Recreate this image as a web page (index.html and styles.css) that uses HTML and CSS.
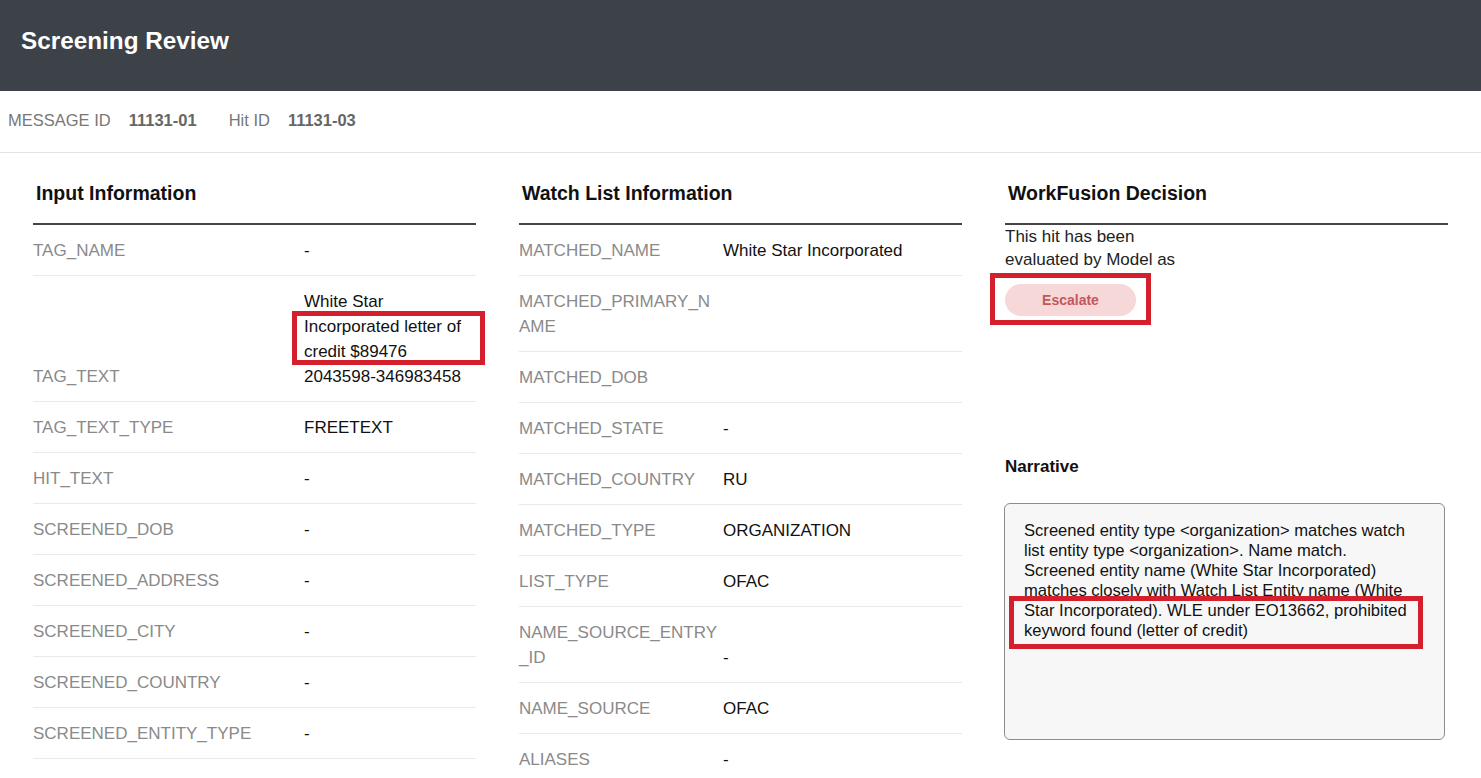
FILE: index.html
```html
<!DOCTYPE html>
<html lang="en">
<head>
<meta charset="utf-8">
<title>Screening Review</title>
<link rel="stylesheet" href="styles.css">
</head>
<body>
<div class="page">
  <header class="topbar">
    <h1 class="title">Screening Review</h1>
  </header>
  <div class="ids">
    <span class="id-label">MESSAGE ID</span>
    <span class="id-value">11131-01</span>
    <span class="id-label id-second">Hit ID</span>
    <span class="id-value">11131-03</span>
  </div>

  <main class="columns">
    <section class="col">
      <h2 class="col-head">Input Information</h2>
      <table class="kv kv-input">
        <colgroup><col class="c-label1"><col></colgroup>
        <tr><td class="k">TAG_NAME</td><td class="v">-</td></tr>
        <tr><td class="k">TAG_TEXT</td><td class="v">White Star Incorporated letter of credit $89476 2043598-346983458</td></tr>
        <tr><td class="k">TAG_TEXT_TYPE</td><td class="v">FREETEXT</td></tr>
        <tr><td class="k">HIT_TEXT</td><td class="v">-</td></tr>
        <tr><td class="k">SCREENED_DOB</td><td class="v">-</td></tr>
        <tr><td class="k">SCREENED_ADDRESS</td><td class="v">-</td></tr>
        <tr><td class="k">SCREENED_CITY</td><td class="v">-</td></tr>
        <tr><td class="k">SCREENED_COUNTRY</td><td class="v">-</td></tr>
        <tr><td class="k">SCREENED_ENTITY_TYPE</td><td class="v">-</td></tr>
      </table>
    </section>

    <section class="col">
      <h2 class="col-head">Watch List Information</h2>
      <table class="kv kv-watch">
        <colgroup><col class="c-label2"><col></colgroup>
        <tr><td class="k">MATCHED_NAME</td><td class="v">White Star Incorporated</td></tr>
        <tr><td class="k">MATCHED_PRIMARY_NAME</td><td class="v"></td></tr>
        <tr><td class="k">MATCHED_DOB</td><td class="v"></td></tr>
        <tr><td class="k">MATCHED_STATE</td><td class="v">-</td></tr>
        <tr><td class="k">MATCHED_COUNTRY</td><td class="v">RU</td></tr>
        <tr><td class="k">MATCHED_TYPE</td><td class="v">ORGANIZATION</td></tr>
        <tr><td class="k">LIST_TYPE</td><td class="v">OFAC</td></tr>
        <tr><td class="k">NAME_SOURCE_ENTRY_ID</td><td class="v">-</td></tr>
        <tr><td class="k">NAME_SOURCE</td><td class="v">OFAC</td></tr>
        <tr><td class="k">ALIASES</td><td class="v">-</td></tr>
      </table>
    </section>

    <section class="col">
      <h2 class="col-head">WorkFusion Decision</h2>
      <p class="decision-text">This hit has been evaluated by Model as</p>
      <span class="pill">Escalate</span>
      <h3 class="narr-head">Narrative</h3>
      <div class="narr-box">Screened entity type &lt;organization&gt; matches watch list entity type &lt;organization&gt;. Name match. Screened entity name (White Star Incorporated) matches closely with Watch List Entity name (White Star Incorporated). WLE under EO13662, prohibited keyword found (letter of credit)</div>
    </section>
  </main>

  <div class="mark mark-tag"></div>
  <div class="mark mark-pill"></div>
  <div class="mark mark-narr"></div>
</div>
</body>
</html>
```

FILE: styles.css
```css
html {
  overflow: hidden;
}
body {
  margin: 0;
  background: #ffffff;
  font-family: "Liberation Sans", Arial, sans-serif;
  color: #111111;
}
.page {
  position: relative;
}
.topbar {
  height: 91px;
  background: #3d4249;
  box-sizing: border-box;
  padding: 29px 0 0 21px;
}
.title {
  margin: 0;
  font-size: 24.3px;
  line-height: 24px;
  font-weight: bold;
  color: #ffffff;
}
.ids {
  height: 62px;
  box-sizing: border-box;
  padding: 18px 8px 0;
  border-bottom: 1px solid #e4e4e4;
  font-size: 16.5px;
  line-height: 22px;
  display: flex;
}
.id-label {
  color: #777777;
  margin-right: 18px;
}
.id-second {
  margin-left: 32px;
}
.id-value {
  color: #666666;
  font-weight: bold;
}
.columns {
  display: grid;
  grid-template-columns: 443px 443px 443px;
  column-gap: 43px;
  padding-left: 33px;
}
.col {
  min-width: 0;
}
.col-head {
  margin: 0;
  padding: 28px 0 18px 3px;
  font-size: 19.5px;
  line-height: 24px;
  font-weight: bold;
  color: #111111;
  border-bottom: 2px solid #444444;
}
.kv {
  width: 100%;
  table-layout: fixed;
  border-collapse: collapse;
  font-size: 17px;
  line-height: 25px;
}
.c-label1 { width: 271px; }
.c-label2 { width: 204px; }
.kv td {
  vertical-align: bottom;
  padding: 13px 0 12px;
  border-bottom: 1px solid #e9e9e9;
}
.kv .k {
  color: #8a8a8a;
  word-break: break-all;
  padding-right: 4px;
}
.kv .v {
  color: #111111;
}
.decision-text {
  margin: 0;
  max-width: 180px;
  font-size: 17px;
  line-height: 23px;
  color: #222222;
}
.pill {
  display: inline-flex;
  align-items: center;
  justify-content: center;
  margin-top: 13px;
  width: 131px;
  height: 32px;
  border-radius: 16px;
  background: #f6d8d9;
  color: #c4575d;
  font-size: 14px;
  font-weight: bold;
}
.narr-head {
  margin: 141px 0 0;
  font-size: 17px;
  line-height: 20px;
  font-weight: bold;
  color: #111111;
}
.narr-box {
  margin-top: 26px;
  margin-left: -1px;
  width: 441px;
  height: 237px;
  box-sizing: border-box;
  padding: 17px 25px 16px 19px;
  border: 1px solid #8c8c8c;
  border-radius: 6px;
  background: #f7f7f7;
  font-size: 16.6px;
  line-height: 20px;
  color: #111111;
}
.mark {
  position: absolute;
  box-sizing: border-box;
  border: 5px solid #d3202c;
}
.mark-tag {
  left: 292px;
  top: 311px;
  width: 193px;
  height: 54px;
}
.mark-pill {
  left: 990px;
  top: 273px;
  width: 161px;
  height: 52px;
}
.mark-narr {
  left: 1009px;
  top: 596px;
  width: 414px;
  height: 53px;
}
```
